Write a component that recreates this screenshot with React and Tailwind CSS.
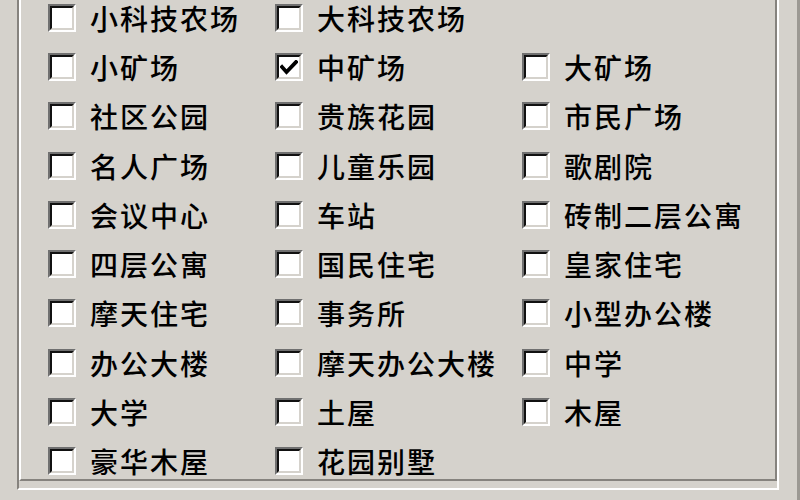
import React from "react";

const rows = [
  ["小科技农场", "大科技农场", null],
  ["小矿场", "中矿场", "大矿场"],
  ["社区公园", "贵族花园", "市民广场"],
  ["名人广场", "儿童乐园", "歌剧院"],
  ["会议中心", "车站", "砖制二层公寓"],
  ["四层公寓", "国民住宅", "皇家住宅"],
  ["摩天住宅", "事务所", "小型办公楼"],
  ["办公大楼", "摩天办公大楼", "中学"],
  ["大学", "土屋", "木屋"],
  ["豪华木屋", "花园别墅", null],
];

const Checkbox = ({ checked }) => (
  <div className="w-[28px] h-[28px] shrink-0 border-2 border-t-[#707070] border-l-[#707070] border-b-white border-r-white">
    <div className="w-full h-full border-2 border-t-[#111] border-l-[#111] border-b-[#d5d2cc] border-r-[#d5d2cc] bg-white flex items-center justify-center">
      {checked && (
        <svg width="18" height="16" viewBox="0 0 18 16" className="mt-[2px]">
          <path d="M2 7 L6.5 12 L16 2" fill="none" stroke="#000" strokeWidth="3.8" strokeLinecap="square" />
        </svg>
      )}
    </div>
  </div>
);

const Item = ({ label, checked }) => (
  <div className="flex items-center gap-[14px]">
    <Checkbox checked={checked} />
    <span className="text-[28px] leading-none font-medium text-black tracking-[2px] whitespace-nowrap">{label}</span>
  </div>
);

export default function App() {
  return (
    <div
      className="w-[800px] h-[500px] bg-[#d5d2cc] overflow-hidden flex"
      style={{ fontFamily: '"Noto Sans CJK SC", "Noto Sans", sans-serif' }}
    >
      {/* group box, etched frame; its caption is scrolled off above */}
      <div className="ml-[17px] w-[762px] h-[490px] border-l-2 border-r-2 border-b-2 border-l-[#86837e] border-r-white border-b-white">
        <div className="w-full h-full border-l-2 border-r-2 border-b-2 border-l-white border-r-[#86837e] border-b-[#86837e] pl-[27px]">
          <div className="grid grid-cols-[227px_247px_1fr] auto-rows-[49.3px] -mt-[7px]">
            {rows.map((row, r) =>
              row.map((label, c) =>
                label ? (
                  <Item key={`${r}-${c}`} label={label} checked={label === "中矿场"} />
                ) : (
                  <div key={`${r}-${c}`} />
                )
              )
            )}
          </div>
        </div>
      </div>
      <div className="ml-auto w-[3px] h-full bg-[#9c9993]" />
    </div>
  );
}
